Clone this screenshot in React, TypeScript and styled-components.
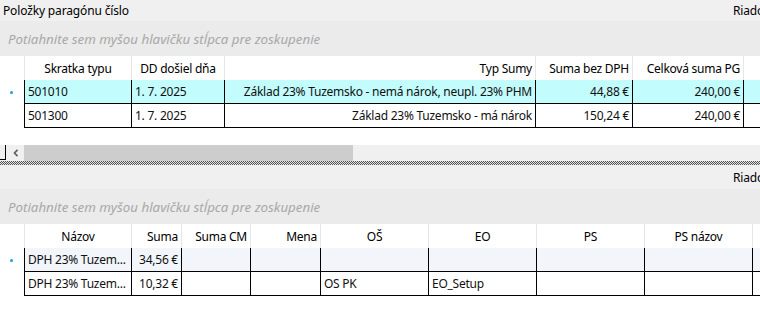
import React from "react";
import styled, { createGlobalStyle } from "styled-components";

const GlobalStyle = createGlobalStyle`
  html, body { margin: 0; padding: 0; background: #f0f0f0; overflow: hidden; }
  body { font-family: "Noto Sans", "Open Sans", sans-serif; font-size: 12px; color: #1a1a1a; }
`;

const Page = styled.div`
  width: 760px;
  height: 311px;
  overflow: hidden;
  display: flex;
  flex-direction: column;
  background: #f0f0f0;
`;

const Panel = styled.section<{ $grow?: boolean }>`
  display: flex;
  flex-direction: column;
  flex: ${(p) => (p.$grow ? "1 1 auto" : "0 0 auto")};
  min-height: 0;
`;

const TitleBar = styled.div<{ $h: number }>`
  height: ${(p) => p.$h}px;
  display: flex;
  align-items: center;
  justify-content: space-between;
  padding-left: 3px;
  background: #f0f0f0;
  white-space: nowrap;
  overflow: hidden;
`;

const Title = styled.span`
  font-size: 12px;
  letter-spacing: -0.15px;
  color: #000;
`;

const RowCount = styled.span`
  width: 27px;
  overflow: hidden;
  font-size: 12px;
  letter-spacing: -0.15px;
  color: #000;
`;

const GroupPanel = styled.div`
  height: 35px;
  background: #ebebeb;
  display: flex;
  align-items: center;
  padding-left: 8px;
  font-style: italic;
  font-size: 13.3px;
  color: #a8a8a8;
  white-space: nowrap;
`;

const GridArea = styled.div<{ $grow?: boolean }>`
  background: #ffffff;
  display: flex;
  flex-direction: column;
  flex: ${(p) => (p.$grow ? "1 1 auto" : "0 0 auto")};
  padding-bottom: ${(p) => (p.$grow ? 0 : 17)}px;
`;

const Row = styled.div<{ $cols: string; $bg?: string }>`
  display: grid;
  grid-template-columns: ${(p) => p.$cols};
  height: 24px;
  background: ${(p) => p.$bg || "#ffffff"};
  letter-spacing: -0.25px;
`;

const Indicator = styled.div`
  background: #ffffff;
  display: flex;
  align-items: center;
  justify-content: center;
`;

const Dot = styled.span`
  width: 3px;
  height: 3px;
  border-radius: 50%;
  background: #1e9fdc;
  margin-right: 2px;
`;

const HeaderCell = styled.div<{ $align?: string }>`
  border-left: 1px solid #e6e6e6;
  display: flex;
  align-items: center;
  justify-content: ${(p) => p.$align || "center"};
  padding: 0 3px;
  white-space: nowrap;
  overflow: hidden;
  color: #000;
`;

const Cell = styled.div<{ $align?: string }>`
  border-left: 1px solid #000;
  border-bottom: 1px solid #000;
  display: flex;
  align-items: center;
  justify-content: ${(p) => p.$align || "flex-start"};
  padding: 0 3px;
  white-space: nowrap;
  overflow: hidden;
  color: #111;
`;

const ScrollBar = styled.div`
  height: 16px;
  display: flex;
  align-items: stretch;
  background: #f0f0f0;
`;

const Corner = styled.div`
  width: 5px;
  border-right: 1px solid #000;
  border-bottom: 1px solid #000;
  margin-right: 1px;
  height: 14px;
`;

const ArrowButton = styled.div`
  width: 17px;
  display: flex;
  align-items: center;
  justify-content: center;
`;

const Thumb = styled.div`
  width: 329px;
  background: #cdcdcd;
`;

const Splitter = styled.div`
  height: 4px;
  background: repeating-conic-gradient(#505050 0 25%, #e8e8e8 0 50%) 0 0 / 2px 2px;
`;

const topCols = "24px 107px 93px 311px 97px 111px 40px";
const bottomCols = "24px 107px 50px 69px 70px 108px 108px 108px 108px 40px";

type Col = { h: string; ha?: string; da?: string };

const topColumns: Col[] = [
  { h: "Skratka typu" },
  { h: "DD došiel dňa" },
  { h: "Typ Sumy", ha: "flex-end", da: "flex-end" },
  { h: "Suma bez DPH", ha: "flex-end", da: "flex-end" },
  { h: "Celková suma PG", ha: "flex-end", da: "flex-end" },
  { h: "" },
];

const topRows = [
  ["501010", "1. 7. 2025", "Základ 23% Tuzemsko - nemá nárok, neupl. 23% PHM", "44,88 €", "240,00 €", ""],
  ["501300", "1. 7. 2025", "Základ 23% Tuzemsko - má nárok", "150,24 €", "240,00 €", ""],
];

const bottomColumns: Col[] = [
  { h: "Názov" },
  { h: "Suma", ha: "flex-end", da: "flex-end" },
  { h: "Suma CM", ha: "flex-end" },
  { h: "Mena", ha: "flex-end" },
  { h: "OŠ" },
  { h: "EO" },
  { h: "PS" },
  { h: "PS názov" },
  { h: "" },
];

const bottomRows = [
  ["DPH 23% Tuzem...", "34,56 €", "", "", "", "", "", "", ""],
  ["DPH 23% Tuzem...", "10,32 €", "", "", "OS PK", "EO_Setup", "", "", ""],
];

function DataGrid({
  cols,
  columns,
  rows,
  firstBg,
  grow,
}: {
  cols: string;
  columns: Col[];
  rows: string[][];
  firstBg: string;
  grow?: boolean;
}) {
  return (
    <GridArea $grow={grow}>
      <Row $cols={cols}>
        <Indicator />
        {columns.map((c, i) => (
          <HeaderCell key={i} $align={c.ha}>
            {c.h}
          </HeaderCell>
        ))}
      </Row>
      {rows.map((r, ri) => (
        <Row key={ri} $cols={cols} $bg={ri === 0 ? firstBg : "#ffffff"}>
          <Indicator>{ri === 0 && <Dot />}</Indicator>
          {r.map((v, ci) => (
            <Cell key={ci} $align={columns[ci].da}>
              {v}
            </Cell>
          ))}
        </Row>
      ))}
    </GridArea>
  );
}

export default function App() {
  return (
    <Page>
      <GlobalStyle />
      <Panel>
        <TitleBar $h={21}>
          <Title>Položky paragónu číslo</Title>
          <RowCount>Riadok 1 z 2</RowCount>
        </TitleBar>
        <GroupPanel>Potiahnite sem myšou hlavičku stĺpca pre zoskupenie</GroupPanel>
        <DataGrid cols={topCols} columns={topColumns} rows={topRows} firstBg="#c2fcfc" />
        <ScrollBar>
          <Corner />
          <ArrowButton>
            <svg width="6" height="8" viewBox="0 0 6 8">
              <path d="M4.5 0.8 L1.5 4 L4.5 7.2" fill="none" stroke="#606060" strokeWidth="1.7" />
            </svg>
          </ArrowButton>
          <Thumb />
        </ScrollBar>
      </Panel>
      <Splitter />
      <Panel $grow>
        <TitleBar $h={24}>
          <span />
          <RowCount>Riadok 1 z 2</RowCount>
        </TitleBar>
        <GroupPanel>Potiahnite sem myšou hlavičku stĺpca pre zoskupenie</GroupPanel>
        <DataGrid cols={bottomCols} columns={bottomColumns} rows={bottomRows} firstBg="#f2f6fb" grow />
      </Panel>
    </Page>
  );
}
